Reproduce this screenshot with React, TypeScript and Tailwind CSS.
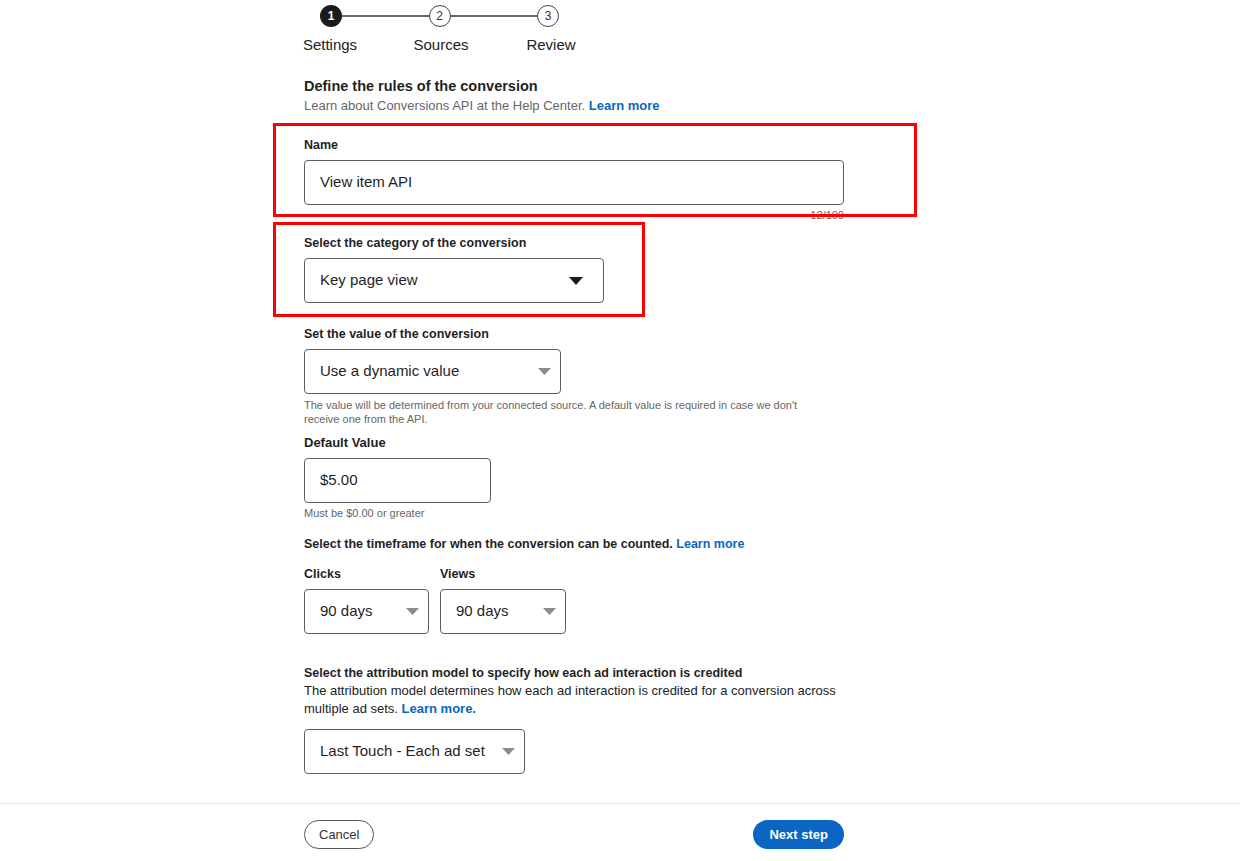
import React from "react";

const font = { fontFamily: '"Liberation Sans", Arial, sans-serif' };

function Caret({ dark }: { dark?: boolean }) {
  return dark ? (
    <svg width="14" height="8" viewBox="0 0 14 8" className="shrink-0">
      <path d="M0 0 H14 L7 8 Z" fill="#1a1a1a" />
    </svg>
  ) : (
    <svg width="13" height="7" viewBox="0 0 13 7" className="shrink-0">
      <path d="M0 0 H13 L6.5 7 Z" fill="#8c8c8c" />
    </svg>
  );
}

function Select({ value, w, dark }: { value: string; w: string; dark?: boolean }) {
  return (
    <div
      className={`${w} h-[45px] border border-[#5e5e5e] rounded-[4px] flex items-center justify-between pl-[15px] text-[15px] text-[#1f1f1f] ${
        dark ? "pr-[20px]" : "pr-[9px]"
      }`}
    >
      <span>{value}</span>
      <Caret dark={dark} />
    </div>
  );
}

export default function App() {
  return (
    <div className="relative w-[1242px] h-[861px] bg-white overflow-hidden text-[#1f1f1f]" style={font}>
      <div className="pl-[304px] pt-[5px] w-[844px]">
        {/* Stepper */}
        <div className="ml-[16px] w-[239px] flex items-center">
          <div className="w-[22px] h-[22px] rounded-full bg-[#1b1b1b] text-white text-[12px] font-bold flex items-center justify-center">1</div>
          <div className="flex-1 h-[2px] bg-[#666]" />
          <div className="w-[22px] h-[22px] rounded-full border border-[#444] bg-white text-[12px] text-[#333] flex items-center justify-center">2</div>
          <div className="flex-1 h-[2px] bg-[#666]" />
          <div className="w-[22px] h-[22px] rounded-full border border-[#444] bg-white text-[12px] text-[#333] flex items-center justify-center">3</div>
        </div>
        <div className="ml-[-28px] w-[330px] grid grid-cols-3 text-center text-[15px] text-[#222] mt-[9px] leading-[18px]">
          <span className="-ml-[2px]">Settings</span>
          <span>Sources</span>
          <span>Review</span>
        </div>

        {/* Title */}
        <div className="mt-[22px] text-[14.5px] font-bold leading-[20px]">Define the rules of the conversion</div>
        <div className="text-[13px] text-[#666] leading-[18px] mt-[1px]">
          Learn about Conversions API at the Help Center.{" "}
          <span className="text-[#0a66c2] font-bold">Learn more</span>
        </div>

        {/* Name */}
        <div className="mt-[21px] text-[12.5px] font-bold leading-[18px]">Name</div>
        <div className="mt-[6px] w-[540px] h-[45px] border border-[#5e5e5e] rounded-[4px] flex items-center pl-[15px] text-[15px]">View item API</div>
        <div className="w-[540px] text-right text-[11px] text-[#666] leading-[14px] mt-[3px]">12/100</div>

        {/* Category */}
        <div className="mt-[12px] text-[12.5px] font-bold leading-[18px]">Select the category of the conversion</div>
        <div className="mt-[6px]">
          <Select value="Key page view" w="w-[300px]" dark />
        </div>

        {/* Value */}
        <div className="mt-[22px] text-[12.5px] font-bold leading-[18px]">Set the value of the conversion</div>
        <div className="mt-[6px]">
          <Select value="Use a dynamic value" w="w-[257px]" />
        </div>
        <div className="mt-[4px] w-[530px] text-[11px] text-[#666] leading-[14px]">
          The value will be determined from your connected source. A default value is required in case we don't receive one from the API.
        </div>

        {/* Default value */}
        <div className="mt-[8px] text-[13px] font-bold leading-[18px]">Default Value</div>
        <div className="mt-[6px] w-[187px] h-[45px] border border-[#5e5e5e] rounded-[4px] flex items-center pl-[15px] text-[15px]">$5.00</div>
        <div className="mt-[3px] text-[11px] text-[#666] leading-[14px]">Must be $0.00 or greater</div>

        {/* Timeframe */}
        <div className="mt-[15px] text-[12.5px] font-bold leading-[18px]">
          Select the timeframe for when the conversion can be counted.{" "}
          <span className="text-[#0a66c2]">Learn more</span>
        </div>
        <div className="mt-[12px] flex gap-[11px]">
          <div>
            <div className="text-[12.5px] font-bold leading-[18px]">Clicks</div>
            <div className="mt-[6px]">
              <Select value="90 days" w="w-[125px]" />
            </div>
          </div>
          <div>
            <div className="text-[12.5px] font-bold leading-[18px]">Views</div>
            <div className="mt-[6px]">
              <Select value="90 days" w="w-[126px]" />
            </div>
          </div>
        </div>

        {/* Attribution */}
        <div className="mt-[30px] text-[12.5px] font-bold leading-[18px]">Select the attribution model to specify how each ad interaction is credited</div>
        <div className="w-[540px] text-[13px] leading-[18px] text-[#222]">
          The attribution model determines how each ad interaction is credited for a conversion across multiple ad sets.{" "}
          <span className="text-[#0a66c2] font-bold">Learn more.</span>
        </div>
        <div className="mt-[11px]">
          <Select value="Last Touch - Each ad set" w="w-[221px]" />
        </div>
      </div>

      {/* Footer */}
      <div className="mt-[29px] w-[1240px] border-t border-[#e6e6e6]">
        <div className="pl-[304px] w-[844px] flex items-center justify-between pt-[16px]">
          <div className="h-[29px] px-[14px] rounded-full border border-[#555] text-[13px] flex items-center text-[#333]">Cancel</div>
          <div className="h-[29px] px-[16px] rounded-full bg-[#0a66c2] text-white text-[13px] font-bold flex items-center">Next step</div>
        </div>
      </div>

      {/* Annotation boxes */}
      <div className="absolute left-[273px] top-[123px] w-[644px] h-[94px] border-[3px] border-[#ff0000] pointer-events-none" />
      <div className="absolute left-[273px] top-[222px] w-[372px] h-[95px] border-[3px] border-[#ff0000] pointer-events-none" />
    </div>
  );
}
